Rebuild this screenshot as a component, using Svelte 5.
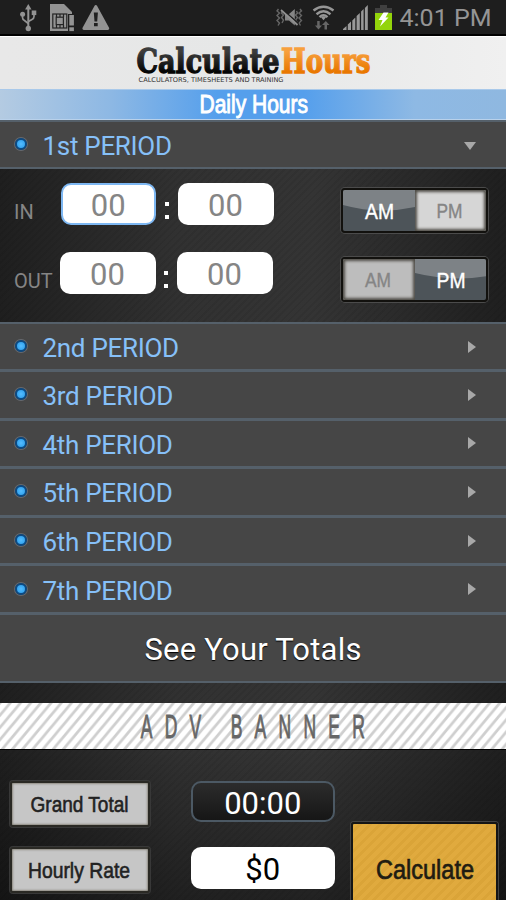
<script>
	const entries = [
		{ label: 'IN', meridiem: 'AM', focused: true },
		{ label: 'OUT', meridiem: 'PM', focused: false }
	];

	const periods = ['2nd', '3rd', '4th', '5th', '6th', '7th'];
</script>

<div class="screen">
	<div class="status-bar">
		<svg class="left-icons" width="120" height="34" viewBox="0 0 120 34">
			<g fill="none" stroke="#939393" stroke-width="1.7">
				<path d="M28.3 8V28" stroke-width="2" />
				<path d="M22.5 14V17.5Q22.5 19.5 24.5 20.5L28.3 23.5M34 13V16.5Q34 18.5 32 19.5L28.3 21.5" />
			</g>
			<g fill="#939393">
				<path d="M28.3 4L31.5 9.5H25.1Z" />
				<circle cx="22.6" cy="14.2" r="2.5" />
				<rect x="31.7" y="10.5" width="4.6" height="4.6" />
				<circle cx="28.3" cy="28.5" r="2.7" />
				<path d="M50 4H64L72 12V14H68V31H50Z" />
				<rect x="69.3" y="15" width="4.6" height="10.5" />
				<rect x="69.3" y="27.3" width="4.6" height="3.8" />
				<path d="M95.8 6.5L107.800 28.5H83.800Z" stroke="#939393" stroke-width="2.8" stroke-linejoin="round" />
			</g>
			<g fill="none" stroke="#242424" stroke-width="1.2">
				<rect x="52.8" y="14" width="14" height="14" />
				<rect x="56.2" y="17.2" width="7.2" height="7.4" />
				<path d="M56.5 14V17M60 14V17M63.5 14V17M56.5 25V28M60 25V28M63.5 25V28" />
			</g>
			<path d="M93.8 12.5H97.900L97.2 21.500H94.500ZM94 23H97.700V26.300H94Z" fill="#202020" />
		</svg>
		<svg class="right-icons" width="124" height="34" viewBox="272 0 124 34">
			<g fill="none" stroke="#666" stroke-width="1.4">
				<path d="M278.5 9L277 11L279.5 13L277 15.5L279.5 18L277 20.5L279.5 23L278 25.5" />
				<path d="M282.5 11L281.5 13L283.5 15L281.5 17.5L283.5 20L282 23" />
				<path d="M300 9L301.500 11L299 13L301.500 15.5L299 18L301.500 20.5L299 23L300.5 25.5" />
				<path d="M296.5 11L297.5 13L295.5 15L297.5 17.5L295.5 20L297.5 23" />
			</g>
			<path d="M285 14H289L294.800 9V25.500L289 20.500H285Z" fill="#858585" />
			<path d="M282.500 9.500L298.500 23.500" stroke="#1e1e1e" stroke-width="1.6" />
			<path d="M281 10L297.500 25" stroke="#909090" stroke-width="1.7" />
			<g fill="none" stroke="#969696" stroke-width="2.4">
				<path d="M313.500 10.5Q323.5 3 333.5 10.5" />
				<path d="M316.5 14.200Q323.5 8.5 330.5 14.200" />
				<path d="M319.5 17.200Q323.5 13.500 327.500 17.200" />
			</g>
			<path d="M321 17.300Q323.5 15.300 326 17.300L323.5 20.300Z" fill="#969696" />
			<path d="M317.200 21H319.700V25.5H322L318.5 29.5L315 25.5H317.200ZM324.5 29.5V25H322L325.800 21L329.500 25H327V29.5Z" fill="#666" />
			<g fill="#999">
				<path d="M343 30V29L346.5 26V30ZM347.800 30V24.5L351 21.5V30ZM352.300 30V20.5L355.300 17.5V30ZM356.600 30V16L359.800 13V30Z" />
				<path d="M361.100 30V11.5L363.600 9V30ZM364.900 30V8L367.800 5V30Z" />
			</g>
			<path d="M380 5H387V8H392V13H375V8H380Z" fill="#404040" />
			<rect x="375" y="13" width="17" height="17" fill="#93d40b" />
			<path d="M383.5 12.5H388.5L385.5 17.5H388.5L380 26.5L382.5 20H378.5Z" fill="#fff" />
		</svg>
		<svg class="clock" width="96" height="34">
			<text x="3.5" y="26.2" textLength="92" lengthAdjust="spacingAndGlyphs">4:01 PM</text>
		</svg>
	</div>

	<header>
		<svg width="506" height="53" viewBox="0 36 506 53">
			<defs>
				<linearGradient id="ink" x1="0" y1="0" x2="0" y2="1">
					<stop offset="0.25" stop-color="#3c3c3c" />
					<stop offset="0.75" stop-color="#050505" />
				</linearGradient>
				<linearGradient id="orange" x1="0" y1="0" x2="0" y2="1">
					<stop offset="0.25" stop-color="#f7a03c" />
					<stop offset="0.75" stop-color="#e97800" />
				</linearGradient>
			</defs>
			<text class="logo" x="136.5" y="72" textLength="143" lengthAdjust="spacingAndGlyphs" fill="url(#ink)" stroke="url(#ink)">Calculate</text>
			<text class="logo" x="281" y="72" textLength="89.500" lengthAdjust="spacingAndGlyphs" fill="url(#orange)" stroke="url(#orange)">Hours</text>
			<text class="tagline" x="138.5" y="81" textLength="145" lengthAdjust="spacingAndGlyphs">CALCULATORS, TIMESHEETS AND TRAINING</text>
		</svg>
	</header>

	<div class="title">
		<svg width="506" height="29">
			<text x="199.500" y="22.800" textLength="108.500" lengthAdjust="spacingAndGlyphs">Daily Hours</text>
		</svg>
	</div>

	<div class="period first">
		<span class="dot"></span>
		<span class="name">1st PERIOD</span>
		<span class="arrow down"></span>
	</div>

	<div class="entries">
		{#each entries as entry}
			<div class="entry" class:second={entry.label === 'OUT'}>
				<span class="entry-label">{entry.label}</span>
				<div class="field" class:focused={entry.focused}>00</div>
				<div class="colon"><i></i><i></i></div>
				<div class="field">00</div>
				<div class="toggle">
					{#each ['AM', 'PM'] as half}
						<div class="half" class:on={entry.meridiem === half} class:dim={entry.label === 'OUT'}>
							<svg width="72" height="41">
								{#if entry.meridiem === half}
									<path class="gloss" d={half === 'AM' ? 'M0 0H72V17Q36 25 0 15Z' : 'M0 0H72V17Q36 23 0 14Z'} />
								{/if}
								<text
									x={half === 'AM' ? 22 : 21.5}
									y={entry.meridiem === half ? 29 : 28}
									textLength={entry.meridiem === half ? 29 : 26}
									lengthAdjust="spacingAndGlyphs">{half}</text
								>
							</svg>
						</div>
					{/each}
				</div>
			</div>
		{/each}
	</div>

	<div class="periods">
		{#each periods as period}
			<div class="period">
				<span class="dot"></span>
				<span class="name">{period} PERIOD</span>
				<span class="arrow"></span>
			</div>
		{/each}
	</div>

	<div class="totals">See Your Totals</div>

	<div class="banner">
		<svg width="506" height="46">
			<defs>
				<pattern id="hatch" width="10.2" height="12.2" patternUnits="userSpaceOnUse">
					<path d="M-2 14.6L12.2 -2.4M-7.1 8.5L5.1 -6.1M5.1 18.3L15.3 6.1" stroke="#cfcfcf" stroke-width="2.8" />
				</pattern>
			</defs>
			<rect width="506" height="46" fill="url(#hatch)" />
			<g transform="scale(0.53 1)">
				<text x="265.500" y="35.5" textLength="423">ADV BANNER</text>
			</g>
		</svg>
	</div>

	<div class="summary">
		<div class="tag">
			<svg width="136" height="42"><text x="18.5" y="28.500" textLength="98" lengthAdjust="spacingAndGlyphs">Grand Total</text></svg>
		</div>
		<div class="box dark">00:00</div>
		<div class="tag">
			<svg width="136" height="42"><text x="16" y="28.500" textLength="102" lengthAdjust="spacingAndGlyphs">Hourly Rate</text></svg>
		</div>
		<div class="box">$0</div>
		<div class="calculate">
			<svg width="143" height="74"><text x="23" y="54.5" textLength="98" lengthAdjust="spacingAndGlyphs">Calculate</text></svg>
		</div>
	</div>
</div>

<style>
	:global(body) {
		background: #222;
	}
	.screen {
		width: 506px;
		height: 900px;
		overflow: hidden;
		display: flex;
		flex-direction: column;
		font-family: Roboto, 'Noto Sans', sans-serif;
		background: repeating-linear-gradient(135deg, rgba(0, 0, 0, 0.06) 0 2px, transparent 2px 5px),
			linear-gradient(90deg, #1f1f1f, #313131 35%, #343434 62%, #1f1f1f);
	}
	.screen > * {
		box-sizing: border-box;
		flex: none;
	}
	svg {
		display: block;
	}
	.status-bar {
		height: 36px;
		display: flex;
		background: #1e1e1e;
		border-bottom: 2px solid #000;
	}
	.right-icons {
		margin-left: 152px;
	}
	.clock text {
		font-size: 24.5px;
		fill: #959595;
	}
	header {
		height: 53px;
		background: linear-gradient(90deg, #e8e8e8, #e6e7e7 50%, #f0f0f0);
		border-top: 1px solid #fff;
	}
	.logo {
		font: bold 33px 'DejaVu Serif', serif;
		stroke-width: 1.3;
	}
	.tagline {
		font: 6.5px 'DejaVu Sans', sans-serif;
		fill: #333;
	}
	.title {
		height: 31px;
		background: linear-gradient(90deg, #b4cbe2, #8db8e4 22%, #559fec 43%, #559fec 60%, #8eb9e4 82%, #8fb8e0);
		border-top: 1px solid #a9c9ea;
		border-bottom: 1px solid #b9d1ea;
	}
	.title text {
		font: 25px 'Liberation Sans', sans-serif;
		fill: #fff;
		stroke: #fff;
		stroke-width: 0.9;
	}
	.period {
		box-sizing: border-box;
		height: 48.6px;
		display: flex;
		align-items: center;
		background: #464646;
		border-top: 3px solid #55606a;
		padding: 0 30px 0 15px;
	}
	.first {
		height: 49px;
		border-top-width: 2px;
		border-bottom: 2px solid #55606a;
	}
	.periods .period:first-child {
		height: 47px;
		border-top-width: 2px;
	}
	.dot {
		width: 8px;
		height: 8px;
		border: 2px solid #0d4a82;
		border-radius: 50%;
		background: radial-gradient(#55bdff, #279bea);
		box-shadow: 0 0 0 1px #666a70;
		margin-top: -1px;
	}
	.name {
		margin-left: 15.5px;
		padding-top: 3px;
		font-size: 26px;
		line-height: 30px;
		letter-spacing: -0.3px;
		color: #86c0f8;
		flex: 1;
	}
	.arrow {
		border: 6px solid transparent;
		border-left: 8px solid #a8a8a8;
		border-right: 0;
	}
	.arrow.down {
		border: 6px solid transparent;
		border-top: 8px solid #a8a8a8;
		border-bottom: 0;
		margin-top: 2px;
	}
	.entries {
		height: 153px;
		padding: 13.5px 0 0;
		display: flex;
		flex-direction: column;
		gap: 27.5px;
	}
	.entry {
		display: grid;
		grid-template-columns: 60.5px 95.5px 21.5px 96px 147px;
		height: 42px;
	}
	.entry.second {
		grid-template-columns: 59.5px 96px 21px 96px 147px;
	}
	.entry-label {
		padding: 17px 0 0 14px;
		font-size: 20px;
		line-height: 24px;
		color: #858585;
	}
	.field {
		box-sizing: border-box;
		height: 42px;
		border-radius: 10px;
		background: #fff;
		color: #858585;
		font-size: 31px;
		line-height: 45px;
		text-align: center;
	}
	.focused {
		border: 2px solid #7db7f2;
		line-height: 41px;
	}
	.colon {
		display: flex;
		flex-direction: column;
		align-items: center;
		gap: 9px;
		padding-top: 19px;
	}
	.colon i {
		width: 4px;
		height: 4px;
		background: #fff;
	}
	.toggle {
		box-sizing: border-box;
		width: 147px;
		height: 45px;
		margin: 5px 0 0 67.5px;
		display: flex;
		border: 2px solid #12110e;
		border-radius: 4px;
		box-shadow: 0 0 0 1px #4b4b4b;
		overflow: hidden;
	}
	.second .toggle {
		margin-left: 68.5px;
	}
	.half {
		box-sizing: border-box;
		width: 71.5px;
		background: #d6d6d6;
		box-shadow: inset 0 0 3px 2px #4f4d47;
	}
	.half.dim {
		background: #bdbdbd;
	}
	.half.on {
		background: #4d5459;
		box-shadow: none;
	}
	.gloss {
		fill: #7d8286;
	}
	.half text {
		font: 20px 'Liberation Sans', sans-serif;
		fill: #858585;
		stroke: #858585;
		stroke-width: 0.4;
	}
	.half.on text {
		font-size: 22px;
		fill: #fff;
		stroke: #fff;
		stroke-width: 0.4;
	}
	.totals {
		height: 71px;
		background: #464646;
		border-top: 3px solid #55606a;
		border-bottom: 2px solid #55606a;
		font-size: 31px;
		line-height: 69px;
		letter-spacing: 0.2px;
		text-align: center;
		color: #fff;
		text-shadow: 0 1px 1px #000;
	}
	.banner {
		height: 47px;
		margin-top: 20px;
		background: #fff;
		border-bottom: 1px solid #000;
	}
	.banner text {
		font: 33px 'Liberation Sans', sans-serif;
		fill: #666;
		stroke: #666;
		stroke-width: 1;
	}
	.summary {
		height: 150px;
		display: grid;
		grid-template-columns: 140px 144.5px 147px;
		grid-template-rows: 46px 46px;
		column-gap: 41px;
		row-gap: 20px;
		padding: 31.5px 8px 0 9.5px;
		background: linear-gradient(180deg, transparent, rgba(0, 0, 0, 0.35));
	}
	.tag {
		box-sizing: border-box;
		border: 2px solid #2a2924;
		border-radius: 3px;
		background: #c6c6c6;
		box-shadow: inset 0 0 2px 1px #8d8a80, 0 0 0 1px #383838;
	}
	.tag text {
		font: 22px 'Liberation Sans', sans-serif;
		fill: #222;
		stroke: #222;
		stroke-width: 0.6;
	}
	.box {
		box-sizing: border-box;
		height: 42px;
		border-radius: 10px;
		background: #fff;
		color: #000;
		font-size: 31px;
		line-height: 45px;
		text-align: center;
	}
	.box.dark {
		height: 41px;
		border: 2px solid #4c5964;
		background: linear-gradient(#2c2c2c, #161616);
		color: #fff;
		line-height: 42px;
	}
	.calculate {
		grid-column: 3;
		grid-row: 1 / span 2;
		box-sizing: border-box;
		height: 100px;
		margin: 41px 0 0 -25px;
		width: 147px;
		border: 2px solid #151515;
		border-radius: 3px;
		box-shadow: 0 0 0 1px #444;
		background: repeating-linear-gradient(135deg, #e0aa3e 0 4px, #daa438 4px 7px);
	}
	.calculate text {
		font: 27px 'Liberation Sans', sans-serif;
		fill: #201c12;
		stroke: #201c12;
		stroke-width: 0.7;
	}
</style>
